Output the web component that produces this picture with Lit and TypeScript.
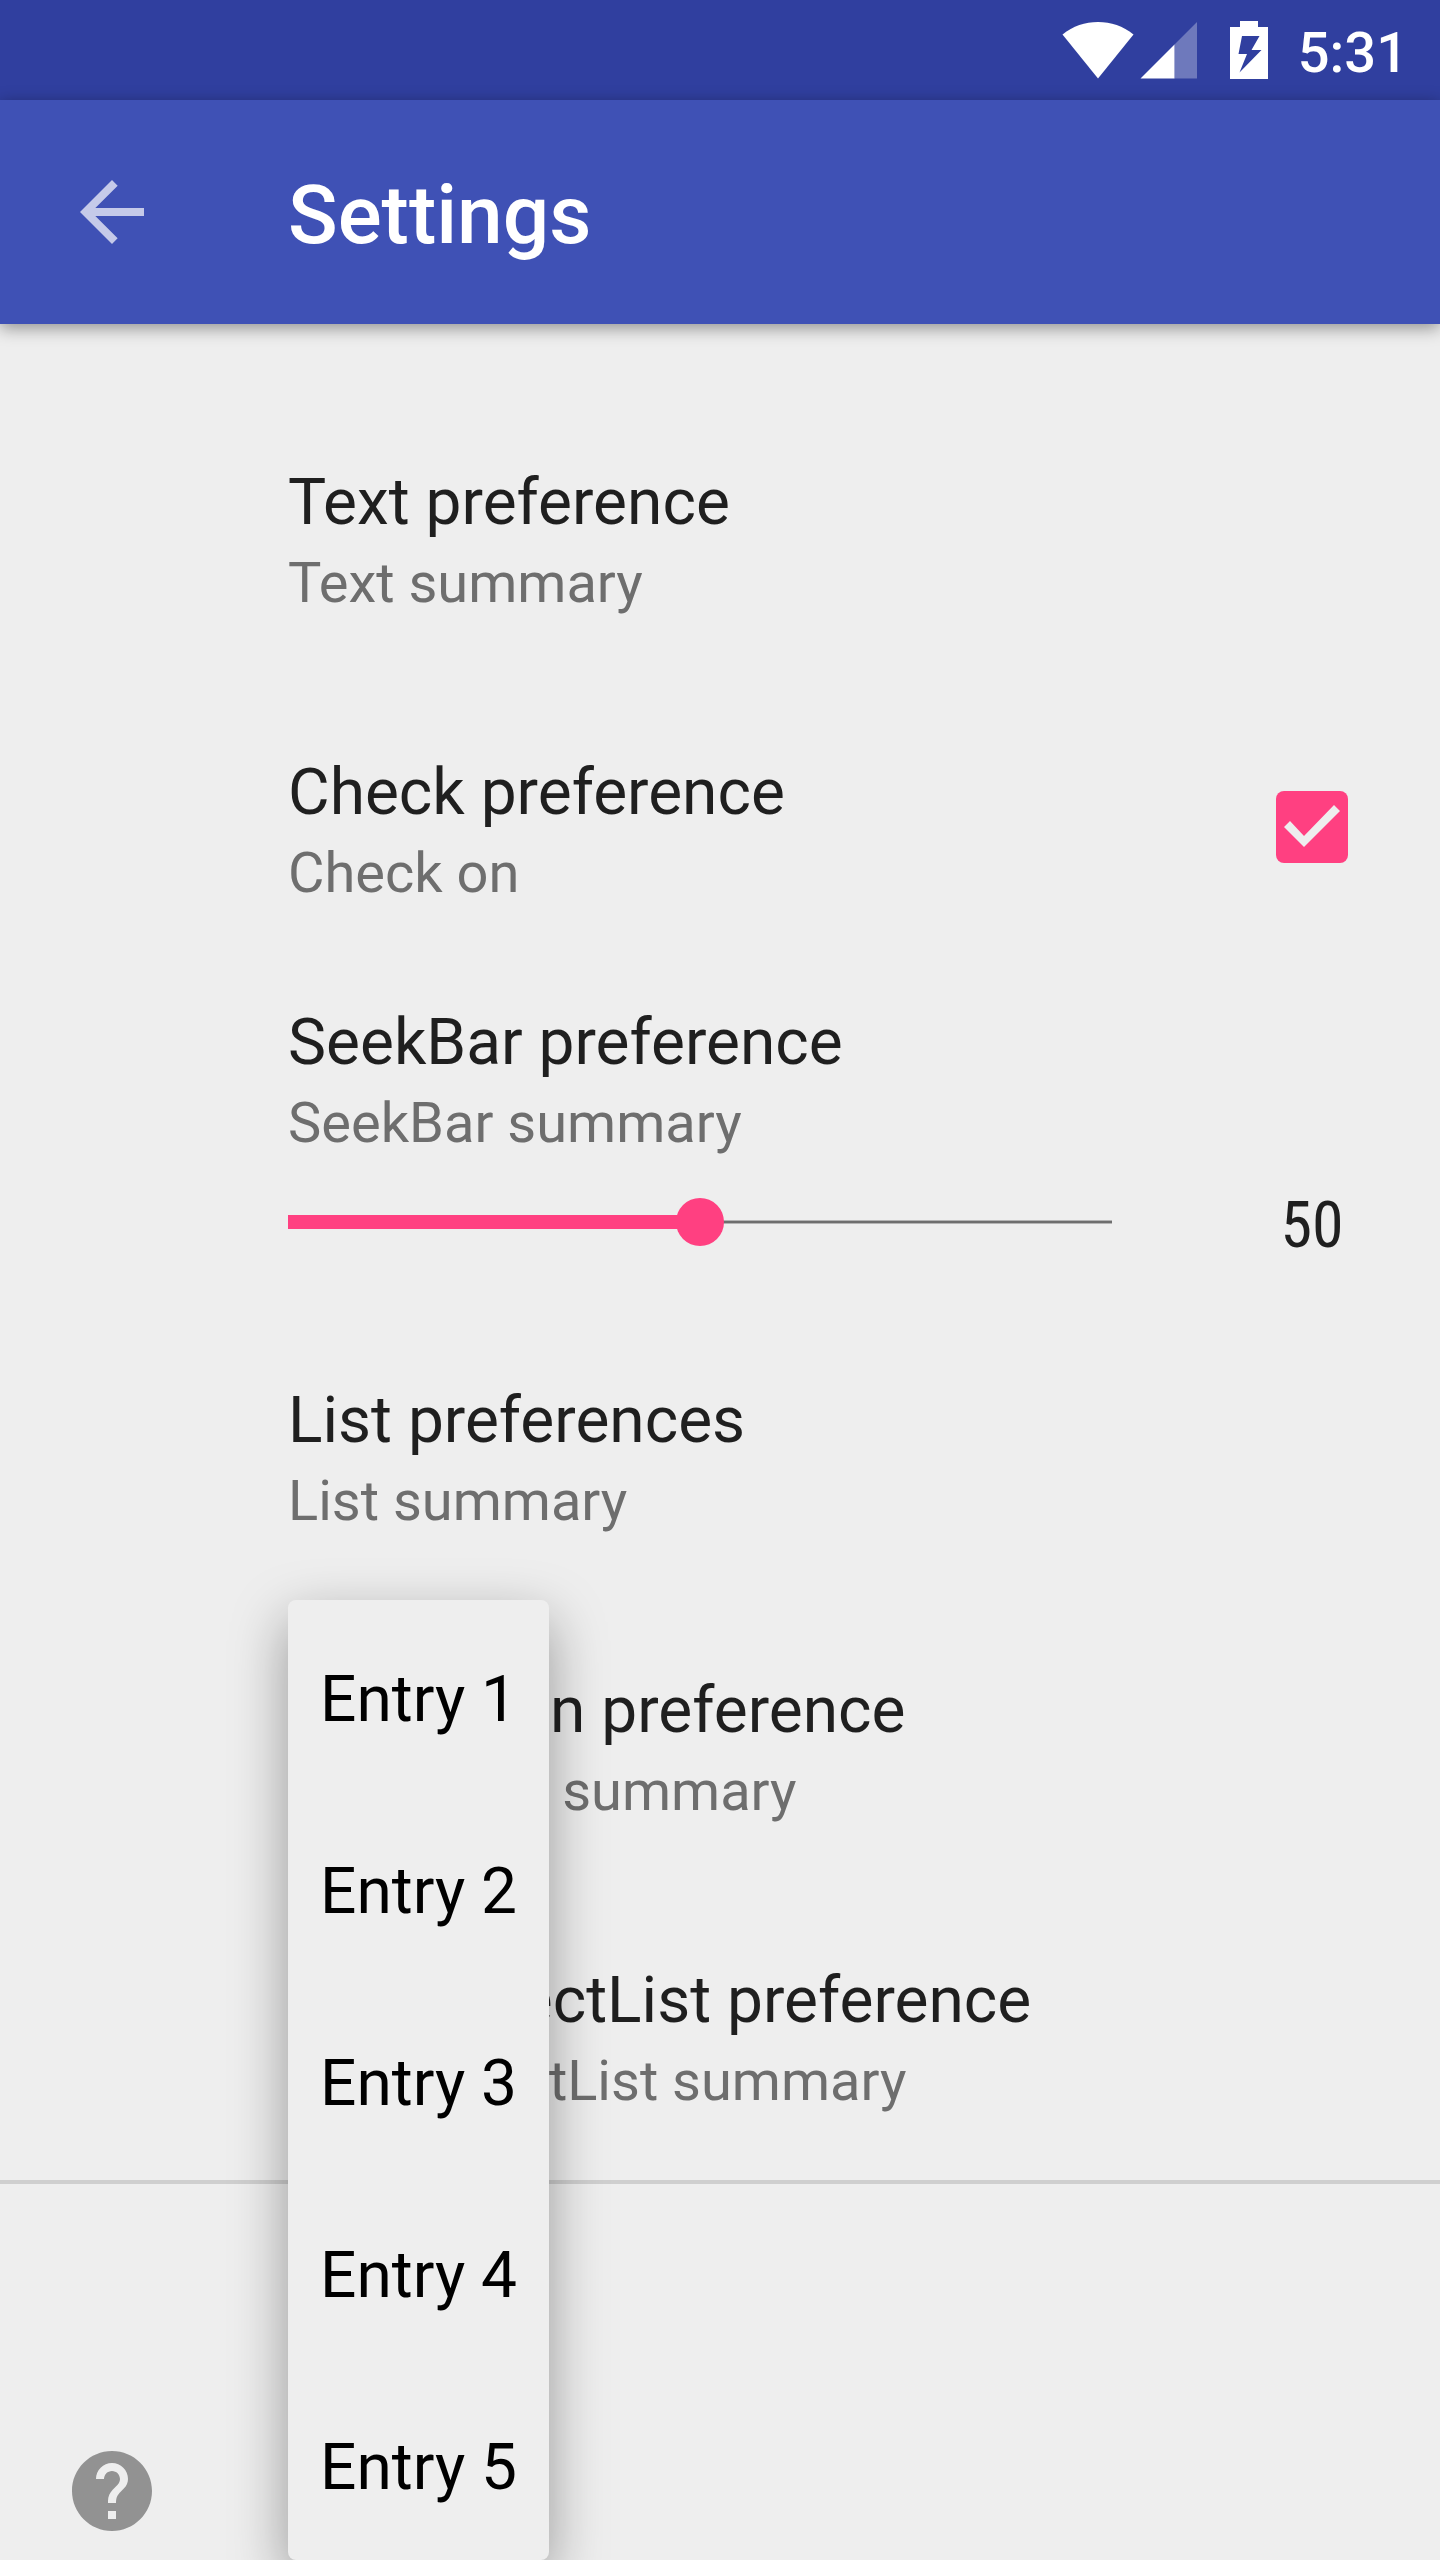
import { LitElement, html, css } from "lit";
import { customElement, state } from "lit/decorators.js";

@customElement("status-bar")
class StatusBar extends LitElement {
  static styles = css`
    :host {
      display: flex;
      align-items: center;
      justify-content: flex-end;
      height: 100px;
      padding-right: 32px;
      background: #303f9f;
      color: #fff;
      font: 500 56px/100px Roboto, sans-serif;
    }
    .wifi {
      width: 72px;
      height: 58px;
      margin-right: 6px;
    }
    .signal {
      width: 58px;
      height: 58px;
      margin-right: 32px;
    }
    .battery {
      width: 38px;
      height: 58px;
      margin-right: 30px;
    }
    .clock {
      padding-top: 6px;
    }
  `;

  render() {
    return html`
      <svg class="wifi" viewBox="0 0 72 58" aria-hidden="true">
        <path fill="#fff" d="M0.500 13.500C11 5 23 1 36 1s25 4 35.500 12.500L36 57.500z" />
      </svg>
      <svg class="signal" viewBox="0 0 58 58" aria-hidden="true">
        <path fill="#fff" fill-opacity=".3" d="M57 1v56.500H34.500V23.500z" />
        <path fill="#fff" d="M34.500 23.500v34H0.500z" />
      </svg>
      <svg class="battery" viewBox="0 0 38 58" aria-hidden="true">
        <path
          fill="#fff"
          fill-rule="evenodd"
          d="M10 0h18v6h10v52H0V6h10zM12 15L8.500 33H17L9.500 51.500 31.500 29H21.500L29.500 15z"
        />
      </svg>
      <span class="clock">5:31</span>
    `;
  }
}

@customElement("app-root")
class AppRoot extends LitElement {
  @state() private checked = true;
  @state() private level = 50;

  static styles = css`
    :host {
      display: flex;
      flex-direction: column;
      min-height: 100vh;
      background: #eee;
      color: #1f1f1f;
      font-family: Roboto, sans-serif;
    }
    button {
      border: 0;
      background: none;
      color: inherit;
      font: inherit;
      text-align: left;
      cursor: pointer;
    }
    .toolbar {
      display: flex;
      align-items: center;
      gap: 128px;
      height: 224px;
      padding: 0 64px;
      background: #3f51b5;
      color: #fff;
      box-shadow: 0 4px 16px rgba(0, 0, 0, 0.4);
    }
    .back {
      width: 96px;
      height: 96px;
      padding: 0;
    }
    .icon {
      display: block;
      width: 96px;
      height: 96px;
    }
    h1 {
      margin: 0;
      padding-top: 6px;
      font-size: 82px;
      line-height: 96px;
      font-weight: 500;
    }
    .list {
      padding-top: 68px;
    }
    .pref {
      box-sizing: border-box;
      display: grid;
      grid-template-columns: 1fr 128px;
      column-gap: 136px;
      align-items: center;
      width: 100%;
      padding: 62px 64px 62px 288px;
    }
    .plain {
      display: block;
    }
    .seek {
      padding-top: 22px;
      padding-bottom: 26px;
    }
    .text {
      display: block;
      padding-top: 6px;
      white-space: nowrap;
    }
    .wide {
      grid-column: 1 / -1;
    }
    .title {
      display: block;
      font-size: 64px;
      line-height: 86px;
    }
    .summary {
      display: block;
      color: #6e6e6e;
      font-size: 56px;
      line-height: 74px;
    }
    .check {
      appearance: none;
      box-sizing: border-box;
      width: 72px;
      height: 72px;
      margin: 0;
      justify-self: center;
      border: 8px solid #6e6e6e;
      border-radius: 8px;
    }
    .check:checked {
      border: 0;
      background: #ff4081;
    }
    .check:checked::before {
      content: "";
      display: block;
      width: 72px;
      height: 72px;
      background: #eee;
      clip-path: polygon(8px 36px, 14px 30px, 28px 45px, 58px 14px, 64px 20px, 28px 56px);
    }
    .slider {
      appearance: none;
      width: 100%;
      height: 124px;
      margin: 0;
      background: none;
    }
    .slider::-webkit-slider-runnable-track {
      height: 14px;
      background:
        linear-gradient(#ff4081, #ff4081) left / var(--fill) 14px no-repeat,
        linear-gradient(#b4b4b4 25%, #6e6e6e 25% 75%, #b4b4b4 75%) center / 100% 4px no-repeat;
    }
    .slider::-webkit-slider-thumb {
      appearance: none;
      width: 48px;
      height: 48px;
      margin-top: -17px;
      border-radius: 50%;
      background: #ff4081;
    }
    .value {
      padding-top: 8px;
      font-family: "Roboto Condensed", Roboto, sans-serif;
      font-size: 64px;
      line-height: 84px;
      text-align: center;
    }
    .anchor {
      position: relative;
    }
    .menu {
      position: absolute;
      z-index: 1;
      top: 0;
      left: 288px;
      margin: 0;
      padding: 0;
      list-style: none;
      border-radius: 8px;
      background: #eee;
      color: #000;
      box-shadow: 0 20px 56px rgba(0, 0, 0, 0.37);
    }
    .entry {
      display: block;
      width: 100%;
      padding: 8px 32px 0;
      font-size: 64px;
      line-height: 184px;
      white-space: nowrap;
    }
    .more {
      display: flex;
      flex: 1;
      align-items: flex-end;
      padding: 0 64px 21px;
      border-top: 4px solid #cfcfcf;
    }
    .help {
      padding: 0;
    }
  `;

  private plain(title: string, summary: string) {
    return html`
      <button class="pref plain">
        <span class="text">
          <span class="title">${title}</span>
          <span class="summary">${summary}</span>
        </span>
      </button>
    `;
  }

  render() {
    return html`
      <status-bar></status-bar>
      <header class="toolbar">
        <button class="back" aria-label="Navigate up">
          <svg class="icon" viewBox="0 0 24 24" aria-hidden="true">
            <path
              fill="#c5cae9"
              d="M20 11H7.830l5.590-5.590L12 4l-8 8 8 8 1.410-1.410L7.830 13H20v-2z"
            />
          </svg>
        </button>
        <h1>Settings</h1>
      </header>
      <main class="list">
        ${this.plain("Text preference", "Text summary")}
        <div class="pref">
          <label class="text" for="check">
            <span class="title">Check preference</span>
            <span class="summary">${this.checked ? "Check on" : "Check off"}</span>
          </label>
          <input
            id="check"
            class="check"
            type="checkbox"
            .checked=${this.checked}
            @change=${(e: Event) => (this.checked = (e.target as HTMLInputElement).checked)}
          />
        </div>
        <div class="pref seek">
          <label class="text wide" for="seek">
            <span class="title">SeekBar preference</span>
            <span class="summary">SeekBar summary</span>
          </label>
          <input
            id="seek"
            class="slider"
            type="range"
            min="0"
            max="100"
            .value=${String(this.level)}
            style="--fill: ${this.level}%"
            @input=${(e: Event) => (this.level = Number((e.target as HTMLInputElement).value))}
          />
          <output class="value" for="seek">${this.level}</output>
        </div>
        ${this.plain("List preferences", "List summary")}
        <div class="anchor">
          ${this.plain("DropDown preference", "DropDown summary")}
          <ul class="menu">
            ${[1, 2, 3, 4, 5].map((n) => html`<li><button class="entry">Entry ${n}</button></li>`)}
          </ul>
        </div>
        ${this.plain("MultiSelectList preference", "MultiSelectList summary")}
      </main>
      <section class="more">
        <button class="help" aria-label="Help">
          <svg class="icon" viewBox="0 0 24 24" aria-hidden="true">
            <path
              fill="#929292"
              d="M12 2C6.480 2 2 6.480 2 12s4.480 10 10 10 10-4.480 10-10S17.520 2 12 2zm1 17h-2v-2h2v2zm2.070-7.750l-.9.920C13.450 12.900 13 13.500 13 15h-2v-.5c0-1.100.45-2.100 1.170-2.830l1.240-1.260c.37-.36.59-.86.59-1.410 0-1.100-.9-2-2-2s-2 .9-2 2H8c0-2.210 1.790-4 4-4s4 1.790 4 4c0 .88-.36 1.680-.93 2.250z"
            />
          </svg>
        </button>
      </section>
    `;
  }
}
